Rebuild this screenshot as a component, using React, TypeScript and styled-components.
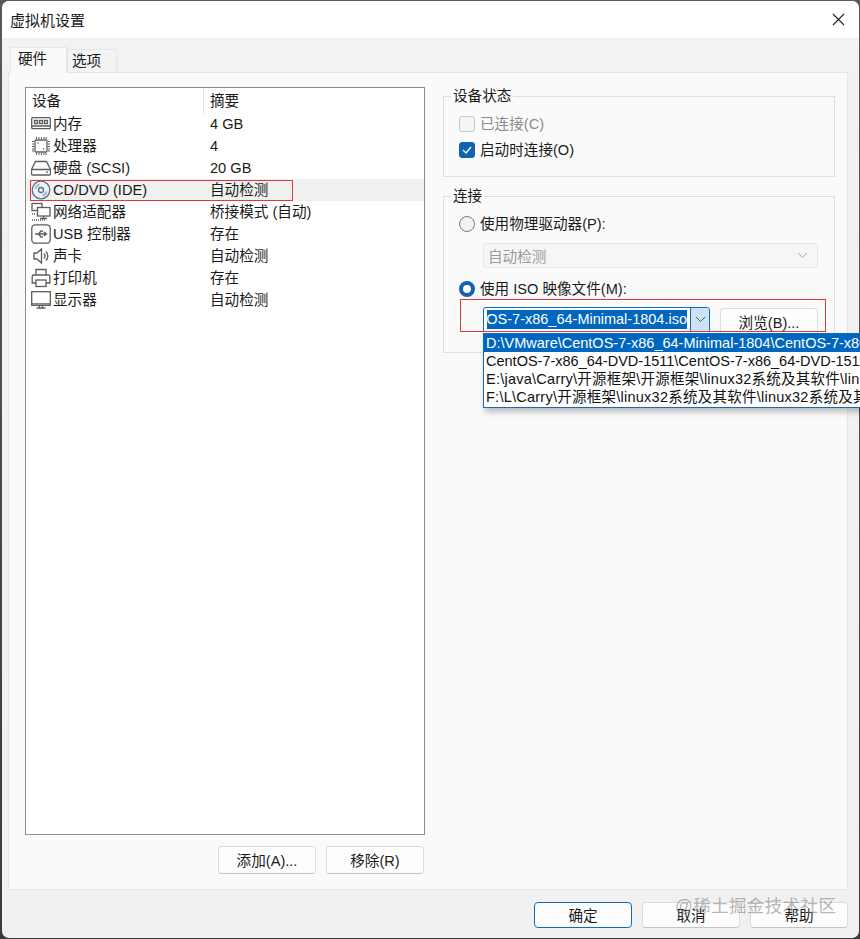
import React from "react";
import styled, { createGlobalStyle } from "styled-components";

const UI_FONT = `"Liberation Sans", "Noto Sans CJK SC", sans-serif`;

const GlobalStyle = createGlobalStyle`
  html, body {
    margin: 0;
    padding: 0;
    background: #f0f0f0;
  }
  * {
    box-sizing: border-box;
  }
`;

const Screen = styled.div`
  width: 860px;
  height: 939px;
  padding: 1px 1px 1px 2px;
  background: linear-gradient(#5a5a5a, #3a3a3a);
  overflow: hidden;
  font-family: ${UI_FONT};
  font-size: 14.6px;
  color: #1a1a1a;
`;

const Dialog = styled.div`
  position: relative;
  height: 100%;
  display: flex;
  flex-direction: column;
  background: #f1f1f1;
  border-radius: 7px;
`;

const TitleBar = styled.div`
  height: 37px;
  flex: none;
  display: flex;
  align-items: center;
  justify-content: space-between;
  padding: 0 14px 1px 8px;
  background: #fff;
  border-radius: 7px 7px 0 0;
`;

const Title = styled.span`
  font-size: 15px;
`;

const TabStrip = styled.div`
  height: 34px;
  flex: none;
  display: flex;
  align-items: flex-end;
  padding-left: 8px;
  background: #f2f2f2;
`;

const Tab = styled.div<{ $active?: boolean }>`
  height: ${({ $active }) => ($active ? "26px" : "23px")};
  width: ${({ $active }) => ($active ? "57px" : "50px")};
  padding: ${({ $active }) => ($active ? "2px 0 0 7px" : "2px 0 0 4px")};
  background: ${({ $active }) => ($active ? "#fafafa" : "#f3f3f3")};
  border: 1px solid #e6e6e6;
  border-bottom: none;
  line-height: 18px;
  margin-bottom: ${({ $active }) => ($active ? "-1px" : "0")};
  position: relative;
`;

const Pane = styled.div`
  height: 818px;
  width: 840px;
  flex: none;
  margin-left: 6px;
  padding: 14px 12px 15px 16px;
  display: flex;
  gap: 18px;
  background: #fafafa;
  border: 1px solid #e6e6e6;
`;

const LeftColumn = styled.div`
  width: 400px;
  flex: none;
  display: flex;
  flex-direction: column;
`;

const DeviceList = styled.div`
  height: 748px;
  background: #fff;
  border: 1px solid #8c8c8c;
  flex: none;
`;

const ListHeader = styled.div`
  height: 25px;
  display: grid;
  grid-template-columns: 177px 1fr;
  line-height: 26px;
`;

const HeaderCell = styled.div<{ $divided?: boolean }>`
  padding-left: 6px;
  border-left: ${({ $divided }) => ($divided ? "1px solid #e5e5e5" : "none")};
`;

const DeviceRow = styled.div<{ $selected?: boolean }>`
  height: 22px;
  display: grid;
  grid-template-columns: 184px 1fr;
  line-height: 22px;
  background: ${({ $selected }) => ($selected ? "#f0f0f0" : "transparent")};
`;

const DeviceName = styled.div`
  display: flex;
  align-items: center;
  gap: 2px;
  padding-left: 5px;
  white-space: nowrap;
`;

const IconSlot = styled.svg`
  width: 20px;
  height: 20px;
  flex: none;
  fill: none;
  stroke: #5c5c5c;
  stroke-width: 1.3;
`;

const ListActions = styled.div`
  display: flex;
  justify-content: flex-end;
  gap: 10px;
  margin-top: 11px;
  padding-right: 1px;
`;

const PushButton = styled.div<{ $width: number; $primary?: boolean; $height?: number; $shift?: number }>`
  width: ${({ $width }) => $width}px;
  height: ${({ $height }) => $height ?? 28}px;
  margin-top: ${({ $shift }) => $shift ?? 0}px;
  padding-bottom: 2px;
  flex: none;
  display: flex;
  align-items: center;
  justify-content: center;
  background: #fdfdfd;
  border: 1px solid ${({ $primary }) => ($primary ? "#0f6cbd" : "#dcdcdc")};
  border-bottom-color: ${({ $primary }) => ($primary ? "#0f6cbd" : "#c4c4c4")};
  border-radius: 4px;
`;

const RightColumn = styled.div`
  flex: 1;
  display: flex;
  flex-direction: column;
  gap: 19px;
  padding-top: 9px;
`;

const Group = styled.div<{ $height: number }>`
  position: relative;
  height: ${({ $height }) => $height}px;
  border: 1px solid #dfdfdf;
  padding: 15px 15px 0 15px;
`;

const GroupLabel = styled.span`
  position: absolute;
  top: -10px;
  left: 7px;
  padding: 0 2px;
  background: #fafafa;
  line-height: 18px;
`;

const CheckRow = styled.div<{ $disabled?: boolean; $top?: number }>`
  display: flex;
  align-items: center;
  gap: 5px;
  height: 16px;
  margin-top: ${({ $top }) => $top ?? 0}px;
  color: ${({ $disabled }) => ($disabled ? "#8a8a8a" : "#1a1a1a")};
`;

const CheckLabel = styled.span`
  margin-bottom: 3px;
  white-space: nowrap;
`;

const CheckBox = styled.span<{ $checked?: boolean }>`
  width: 16px;
  height: 16px;
  flex: none;
  display: flex;
  align-items: center;
  justify-content: center;
  border-radius: 3px;
  background: ${({ $checked }) => ($checked ? "#0f62b5" : "#f5f5f5")};
  border: 1px solid ${({ $checked }) => ($checked ? "#0f62b5" : "#c8c8c8")};
`;

const Radio = styled.span<{ $checked?: boolean }>`
  width: 16px;
  height: 16px;
  flex: none;
  border-radius: 50%;
  background: ${({ $checked }) => ($checked ? "#fff" : "#f3f3f3")};
  border: ${({ $checked }) => ($checked ? "4.5px solid #0f62b5" : "1px solid #7a7a7a")};
`;

const DisabledSelect = styled.div`
  width: 335px;
  height: 25px;
  margin: 11px 0 0 24px;
  padding: 0 9px 0 4px;
  display: flex;
  align-items: center;
  justify-content: space-between;
  background: #f6f6f6;
  border: 1px solid #e8e8e8;
  border-radius: 3px;
  color: #9a9a9a;
`;

const IsoRow = styled.div`
  display: flex;
  gap: 10px;
  margin: 10px 0 0 24px;
`;

const IsoCombo = styled.div`
  width: 227px;
  height: 25px;
  flex: none;
  display: flex;
  border: 1px solid #0f6cbd;
  border-radius: 3px 3px 0 0;
  background: #fff;
  overflow: hidden;
`;

const IsoValue = styled.div`
  flex: 1;
  min-width: 0;
  margin: 2px 3px 2px 3px;
  display: flex;
  justify-content: flex-end;
  background: #0067c0;
  color: #fff;
  line-height: 19px;
  font-size: 14.5px;
  white-space: nowrap;
  overflow: hidden;
`;

const IsoToggle = styled.div`
  width: 19px;
  flex: none;
  display: flex;
  align-items: center;
  justify-content: center;
  background: #cde3f5;
  border-left: 1px solid #0f6cbd;
`;

const IsoPopup = styled.div`
  position: absolute;
  left: 481px;
  top: 332px;
  width: 390px;
  height: 75px;
  background: #fff;
  border: 1px solid #0f6cbd;
  border-right: none;
  box-shadow: 2px 4px 6px rgba(0, 0, 0, 0.25);
  font-size: 14.5px;
  line-height: 18px;
  white-space: nowrap;
  overflow: hidden;
`;

const PopupItem = styled.div<{ $selected?: boolean; $tracking?: number }>`
  height: 18px;
  padding-left: 2px;
  letter-spacing: ${({ $tracking }) => $tracking ?? 0}px;
  color: ${({ $selected }) => ($selected ? "#fff" : "#111")};
  background: ${({ $selected }) => ($selected ? "#0067c0" : "transparent")};
`;

const Annotation = styled.div<{ $left: number; $top: number; $width: number; $height: number }>`
  position: absolute;
  left: ${({ $left }) => $left}px;
  top: ${({ $top }) => $top}px;
  width: ${({ $width }) => $width}px;
  height: ${({ $height }) => $height}px;
  border: 1px solid #dc3a40;
  pointer-events: none;
`;

const Footer = styled.div`
  flex: 1;
  display: flex;
  justify-content: flex-end;
  gap: 10px;
  padding: 12px 11px 0 0;
`;

const Watermark = styled.div`
  position: absolute;
  left: 673px;
  top: 891px;
  font-size: 17.5px;
  color: rgba(120, 120, 120, 0.55);
  letter-spacing: 0.4px;
  white-space: nowrap;
`;

const Chevron = ({ color = "#555" }: { color?: string }) => (
  <svg width="11" height="7" viewBox="0 0 11 7" fill="none" stroke={color} strokeWidth="1">
    <path d="M1 1l4.5 4.5L10 1" />
  </svg>
);

const CloseIcon = () => (
  <svg width="13" height="13" viewBox="0 0 13 13" fill="none" stroke="#222" strokeWidth="1.1">
    <path d="M1 1l11 11M12 1L1 12" />
  </svg>
);

const MemoryIcon = () => (
  <IconSlot viewBox="0 0 20 20">
    <rect x="0.7" y="3.7" width="18.6" height="11" rx="1" />
    <path d="M3.5 6.5h3v3h-3zM8.5 6.5h3v3h-3zM13.5 6.5h3v3h-3zM0.7 12h18.6" />
  </IconSlot>
);

const CpuIcon = () => (
  <IconSlot viewBox="0 0 20 20">
    <rect x="4" y="4" width="12" height="12" rx="1" />
    <path strokeWidth="1" d="M5.5 1v2M8 1v2M10.5 1v2M13 1v2M15 1v2M5.5 17v2M8 17v2M10.5 17v2M13 17v2M15 17v2M1 5.5h2M1 8h2M1 10.5h2M1 13h2M1 15h2M17 5.5h2M17 8h2M17 10.5h2M17 13h2M17 15h2" />
    <path strokeWidth="1.5" d="M6.5 7h1.2M12 13h1.2" />
  </IconSlot>
);

const DiskIcon = () => (
  <IconSlot viewBox="0 0 20 20">
    <path d="M4.5 3.5h11l4 8V16a1 1 0 0 1-1 1h-17a1 1 0 0 1-1-1v-4.500z" />
    <path d="M0.7 11.500h18.600M15 14.200h2" />
  </IconSlot>
);

const CdIcon = () => (
  <IconSlot viewBox="0 0 20 20">
    <circle cx="10" cy="10" r="8.8" stroke="#4f7390" />
    <circle cx="10" cy="10" r="2.5" stroke="#4f7390" />
    <path d="M4.5 8.5a5.800 5.800 0 0 1 4-4M15.500 11.500a5.800 5.800 0 0 1-4 4" stroke="#8fb8d8" strokeWidth="1.8" />
  </IconSlot>
);

const NetworkIcon = () => (
  <IconSlot viewBox="0 0 20 20">
    <rect x="1" y="1.5" width="10" height="7" />
    <rect x="6.5" y="5.5" width="12.5" height="8.5" fill="#fff" />
    <path d="M12.5 14v2.5M9 16.5h7" />
    <path d="M1 12h3M1 18h13" strokeDasharray="1 1" />
  </IconSlot>
);

const UsbIcon = () => (
  <IconSlot viewBox="0 0 20 20">
    <rect x="0.8" y="0.8" width="18.4" height="18.4" rx="3.5" />
    <path d="M4 10h11.5M13 8l2.5 2-2.5 2M7.500 10l2.500-3h2M7.500 10l2.500 3h2" />
  </IconSlot>
);

const SpeakerIcon = () => (
  <IconSlot viewBox="0 0 20 20">
    <path d="M3 7h3l4.5-4v14L6 13H3z" />
    <path d="M13 7.5a3.500 3.500 0 0 1 0 5M15 5.500a6.500 6.500 0 0 1 0 9" />
  </IconSlot>
);

const PrinterIcon = () => (
  <IconSlot viewBox="0 0 20 20">
    <path d="M5 7V1.500h10V7M5 15H1.200V8.500A1.500 1.500 0 0 1 2.700 7h14.600a1.500 1.500 0 0 1 1.500 1.500V15H15" />
    <rect x="5" y="12" width="10" height="6.5" />
  </IconSlot>
);

const MonitorIcon = () => (
  <IconSlot viewBox="0 0 20 20">
    <rect x="0.7" y="1.7" width="18.6" height="13.6" />
    <path d="M0.700 13.800h18.600M5.500 18h9M8.500 15.500v2.500M11.500 15.500v2.500" />
  </IconSlot>
);

const devices = [
  { name: "内存", summary: "4 GB", icon: <MemoryIcon /> },
  { name: "处理器", summary: "4", icon: <CpuIcon /> },
  { name: "硬盘 (SCSI)", summary: "20 GB", icon: <DiskIcon /> },
  { name: "CD/DVD (IDE)", summary: "自动检测", icon: <CdIcon />, selected: true },
  { name: "网络适配器", summary: "桥接模式 (自动)", icon: <NetworkIcon /> },
  { name: "USB 控制器", summary: "存在", icon: <UsbIcon /> },
  { name: "声卡", summary: "自动检测", icon: <SpeakerIcon /> },
  { name: "打印机", summary: "存在", icon: <PrinterIcon /> },
  { name: "显示器", summary: "自动检测", icon: <MonitorIcon /> },
];

const isoPaths = [
  { path: "D:\\VMware\\CentOS-7-x86_64-Minimal-1804\\CentOS-7-x86_64-Minimal-1804.iso", tracking: 0 },
  { path: "CentOS-7-x86_64-DVD-1511\\CentOS-7-x86_64-DVD-1511.iso", tracking: 0 },
  { path: "E:\\java\\Carry\\开源框架\\开源框架\\linux32系统及其软件\\linux32系统及其软件", tracking: 0.25 },
  { path: "F:\\L\\Carry\\开源框架\\linux32系统及其软件\\linux32系统及其软件\\linux32", tracking: 0.25 },
];

export default function App() {
  return (
    <Screen>
      <GlobalStyle />
      <Dialog>
        <TitleBar>
          <Title>虚拟机设置</Title>
          <CloseIcon />
        </TitleBar>
        <TabStrip>
          <Tab $active>硬件</Tab>
          <Tab>选项</Tab>
        </TabStrip>
        <Pane>
          <LeftColumn>
            <DeviceList>
              <ListHeader>
                <HeaderCell>设备</HeaderCell>
                <HeaderCell $divided>摘要</HeaderCell>
              </ListHeader>
              {devices.map((device) => (
                <DeviceRow key={device.name} $selected={device.selected}>
                  <DeviceName>
                    {device.icon}
                    {device.name}
                  </DeviceName>
                  <span>{device.summary}</span>
                </DeviceRow>
              ))}
            </DeviceList>
            <ListActions>
              <PushButton $width={98}>添加(A)...</PushButton>
              <PushButton $width={98}>移除(R)</PushButton>
            </ListActions>
          </LeftColumn>
          <RightColumn>
            <Group $height={81}>
              <GroupLabel>设备状态</GroupLabel>
              <CheckRow $disabled $top={4}>
                <CheckBox />
                <CheckLabel>已连接(C)</CheckLabel>
              </CheckRow>
              <CheckRow $top={10}>
                <CheckBox $checked>
                  <svg width="10" height="8" viewBox="0 0 10 8" fill="none" stroke="#fff" strokeWidth="1.2">
                    <path d="M1 4l3 3 5-6" />
                  </svg>
                </CheckBox>
                <CheckLabel>启动时连接(O)</CheckLabel>
              </CheckRow>
            </Group>
            <Group $height={157}>
              <GroupLabel>连接</GroupLabel>
              <CheckRow $top={4}>
                <Radio />
                <CheckLabel>使用物理驱动器(P):</CheckLabel>
              </CheckRow>
              <DisabledSelect>
                自动检测
                <Chevron color="#aaa" />
              </DisabledSelect>
              <CheckRow $top={13}>
                <Radio $checked />
                <CheckLabel>使用 ISO 映像文件(M):</CheckLabel>
              </CheckRow>
              <IsoRow>
                <IsoCombo>
                  <IsoValue>
                    <span>CentOS-7-x86_64-Minimal-1804.iso</span>
                  </IsoValue>
                  <IsoToggle>
                    <Chevron />
                  </IsoToggle>
                </IsoCombo>
                <PushButton $width={98} $height={28} $shift={1}>浏览(B)...</PushButton>
              </IsoRow>
            </Group>
          </RightColumn>
        </Pane>
        <Footer>
          <PushButton $width={98} $height={26} $primary>确定</PushButton>
          <PushButton $width={98} $height={26}>取消</PushButton>
          <PushButton $width={98} $height={26}>帮助</PushButton>
        </Footer>
        <IsoPopup>
          {isoPaths.map((item, index) => (
            <PopupItem key={item.path} $selected={index === 0} $tracking={item.tracking}>
              {item.path}
            </PopupItem>
          ))}
        </IsoPopup>
        <Annotation $left={28} $top={179} $width={263} $height={21} />
        <Annotation $left={458} $top={298} $width={366} $height={33} />
        <Watermark>@稀土掘金技术社区</Watermark>
      </Dialog>
    </Screen>
  );
}
